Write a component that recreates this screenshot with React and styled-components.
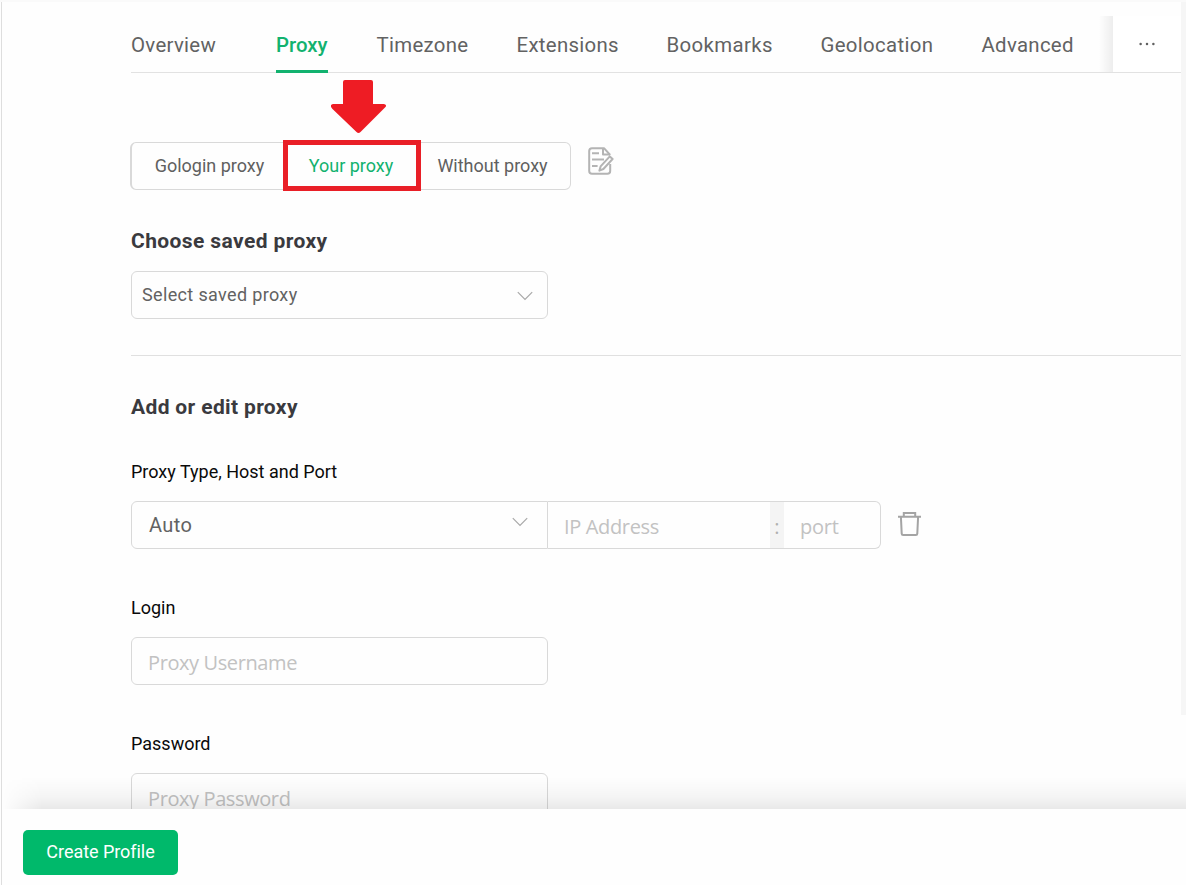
import React from 'react';
import styled, { createGlobalStyle } from 'styled-components';

const GlobalStyle = createGlobalStyle`
  *, *::before, *::after { box-sizing: border-box; }
  body { margin: 0; background: #fff; overflow: hidden; }
  button, input { font: inherit; letter-spacing: inherit; }
`;

const line = '#d9d9d9';
const green = '#00b96b';

const Page = styled.div`
  display: flex;
  flex-direction: column;
  width: 1186px;
  height: 885px;
  overflow: hidden;
  background: #fefefe;
  border-top: 2px solid #fafafa;
  font-family: Roboto, sans-serif;
`;

const Body = styled.div`
  display: flex;
  height: 807px;
  flex: none;
  overflow: hidden;
  border-left: 1px solid #fefefe;
`;

const Panel = styled.main`
  flex: 1;
  min-width: 0;
  border-left: 1px solid #dedede;
  padding: 14px 0 0 129px;
`;

const ScrollTrack = styled.div`
  flex: none;
  width: 5px;
  height: 713px;
  background: #f6f6f6;
`;

const TabBar = styled.nav`
  display: flex;
  height: 57px;
  border-bottom: 1px solid #e2e2e2;
`;

const Tab = styled.a`
  flex: none;
  width: ${p => p.$width}px;
  margin-right: ${p => p.$gap || 48}px;
  height: 57px;
  padding-top: 17px;
  line-height: 24px;
  font-size: 20.4px;
  font-weight: ${p => (p.$active ? 500 : 400)};
  letter-spacing: ${p => p.$track}px;
  white-space: nowrap;
  color: ${p => (p.$active ? '#12b26f' : '#626262')};
  border-bottom: ${p => (p.$active ? '3px solid #12b26f' : '0')};
`;

const TabShade = styled.div`
  width: 14px;
  margin-left: auto;
  background: linear-gradient(to right, rgba(0, 0, 0, 0), rgba(0, 0, 0, 0.065));
`;

const More = styled.button`
  width: 68px;
  border: 0;
  padding: 0;
  display: flex;
  align-items: center;
  justify-content: center;
  background: #fff;
`;

const ModeRow = styled.div`
  display: flex;
  margin: 67px 0 0 -1px;
  height: 51px;
  align-items: center;
`;

const Modes = styled.div`
  display: flex;
  align-items: center;
  height: 48px;
  width: 441px;
  border: 1px solid ${line};
  border-left-width: 2px;
  border-radius: 6px;
`;

const Mode = styled.button`
  flex: none;
  width: ${p => p.$width}px;
  height: ${p => (p.$active ? 51 : 46)}px;
  padding: ${p => p.$pad || '0'};
  border: ${p => (p.$active ? '5px solid #e91f27' : '0')};
  background: ${p => (p.$active ? '#fefefe' : 'transparent')};
  color: ${p => (p.$active ? '#12b26f' : '#606060')};
  font-size: 18px;
  letter-spacing: ${p => p.$track}px;
  white-space: nowrap;
`;

const PointerArrow = styled.svg`
  position: absolute;
  left: 331px;
  top: 80px;
`;

const NoteIcon = styled.svg`
  margin: -10px 0 0 17px;
`;

const Heading = styled.h2`
  margin: ${p => p.$top}px 0 0;
  font-size: 21px;
  line-height: 24px;
  font-weight: 700;
  letter-spacing: ${p => p.$track}px;
  color: #3a3a3e;
`;

const Select = styled.div`
  display: flex;
  align-items: center;
  justify-content: space-between;
  width: 417px;
  height: 48px;
  border: 1px solid ${line};
  border-radius: ${p => (p.$joined ? '6px 0 0 6px' : '6px')};
  padding: ${p => (p.$joined ? '0 19px 0 17px' : '0 14px 2px 10px')};
  font-size: ${p => (p.$joined ? 20 : 18)}px;
  letter-spacing: ${p => p.$track}px;
  color: #626262;

  svg {
    margin-top: ${p => (p.$joined ? '-6px' : '3px')};
  }
`;

const SavedSelect = styled(Select)`
  margin-top: 18px;
`;

const Divider = styled.hr`
  margin: 36px 0 0;
  border: 0;
  border-top: 1px solid #e0e0e0;
`;

const Label = styled.label`
  display: block;
  margin-top: ${p => p.$top}px;
  height: 22px;
  line-height: 22px;
  font-size: 18px;
  letter-spacing: ${p => p.$track}px;
  color: #0a0a0a;
`;

const HostRow = styled.div`
  display: flex;
  align-items: center;
  margin-top: 18px;
  height: 48px;
`;

const HostGroup = styled.div`
  display: flex;
  width: 333px;
  height: 48px;
  border: 1px solid ${line};
  border-left: 0;
  border-radius: 0 6px 6px 0;
  overflow: hidden;
`;

const Input = styled.input`
  width: ${p => p.$width}px;
  height: 100%;
  border: 0;
  outline: 0;
  padding: 3px 0 0 16px;
  background: transparent;
  font-family: 'Open Sans', 'Noto Sans', sans-serif;
  font-weight: 400;
  font-size: 20px;
  letter-spacing: ${p => p.$track}px;
  &::placeholder { color: #c2c2c2; opacity: 1; }
`;

const Colon = styled.span`
  flex: none;
  width: 14px;
  padding-top: 11px;
  text-align: center;
  font: 400 20px/28px 'Open Sans', sans-serif;
  background: #f4f4f4;
  color: #b0b0b0;
`;

const TrashIcon = styled.svg`
  margin: -3px 0 0 17px;
`;

const Field = styled(Input)`
  display: block;
  margin-top: 18px;
  width: 417px;
  height: 48px;
  padding-left: 16px;
  border: 1px solid ${line};
  border-radius: 6px;
`;

const Footer = styled.footer`
  position: relative;
  flex: 1;
  padding: 21px 0 0 21px;
  margin-left: 1px;
  border-left: 1px solid #dedede;
  background: #fefefe;
  &::before {
    content: '';
    position: absolute;
    left: 0;
    right: 0;
    bottom: 100%;
    height: 32px;
    background: linear-gradient(to top, rgba(0, 0, 0, 0.085), rgba(0, 0, 0, 0.035) 40%, rgba(0, 0, 0, 0));
    mask-image: linear-gradient(to right, transparent, #000 40px);
    pointer-events: none;
  }
`;

const CreateButton = styled.button`
  width: 155px;
  height: 45px;
  padding: 0 0 2px 0;
  border: 0;
  border-radius: 5px;
  background: ${green};
  color: #fff;
  font-size: 18px;
  letter-spacing: -0.05px;
`;

const tabs = [
  { label: 'Overview', width: 85, gap: 60, track: 0.3 },
  { label: 'Proxy', width: 52, gap: 48.5, active: true, track: 0 },
  { label: 'Timezone', width: 92, track: 0.3 },
  { label: 'Extensions', width: 102, track: 0.3 },
  { label: 'Bookmarks', width: 106, track: 0.37 },
  { label: 'Geolocation', width: 113, track: 0.33 },
  { label: 'Advanced', width: 93, gap: 1, track: 0.3 },
];

const Chevron = () => (
  <svg width="16" height="10" viewBox="0 0 16 10" fill="none" stroke="#a8a8a8" strokeWidth="1.2">
    <path d="M0.8 1.2 L8 8.4 L15.2 1.2" />
  </svg>
);

export default function App() {
  return (
    <>
      <GlobalStyle />
      <Page>
        <Body>
          <Panel>
            <TabBar>
              {tabs.map(t => (
                <Tab key={t.label} $width={t.width} $gap={t.gap} $active={t.active} $track={t.track}>{t.label}</Tab>
              ))}
              <TabShade />
              <More aria-label="More">
                <svg width="16" height="4" viewBox="0 0 16 4" fill="#606060">
                  <circle cx="1.6" cy="2" r="1.25" />
                  <circle cx="8" cy="2" r="1.25" />
                  <circle cx="14.4" cy="2" r="1.25" />
                </svg>
              </More>
            </TabBar>
            <ModeRow>
              <Modes>
                <Mode $width={151} $pad="0 0 0 4px" $track={0}>Gologin proxy</Mode>
                <Mode $width={138} $active $pad="0 2px 0 0" $track={0}>Your proxy</Mode>
                <Mode $width={144} $pad="0 1px 0 0" $track={0}>Without proxy</Mode>
              </Modes>
              <NoteIcon width="26" height="28" viewBox="0 0 26 28" fill="none" stroke="#b4b4b4" strokeWidth="2" strokeLinejoin="round">
                <path d="M22.2 8 L16 1.2 H4 Q1.2 1.2 1.2 4 V24 Q1.2 26.8 4 26.8 H19.4 Q22.2 26.8 22.2 24 V17" />
                <path d="M15 1.2 V7.6 H22" />
                <path d="M4 6.2 H11 M4 12.6 H16 M4 19 H9.6" />
                <path d="M21.8 9.4 L24.6 12 L15.4 22 L11.4 23.6 L12.6 19.4 Z" fill="#fefefe" />
              </NoteIcon>
            </ModeRow>
            <Heading $top={38} $track={0.4}>Choose saved proxy</Heading>
            <SavedSelect $track={0.35}>
              <span>Select saved proxy</span>
              <Chevron />
            </SavedSelect>
            <Divider />
            <Heading $top={39} $track={0.35}>Add or edit proxy</Heading>
            <Label $top={42} $track={0}>Proxy Type, Host and Port</Label>
            <HostRow>
              <Select $joined $track={0.4}>
                <span>Auto</span>
                <Chevron />
              </Select>
              <HostGroup>
                <Input $width={222} placeholder="IP Address" $track={-0.35} />
                <Colon>:</Colon>
                <Input $width={96} placeholder="port" $track={-0.2} />
              </HostGroup>
              <TrashIcon width="24" height="26" viewBox="0 0 24 26" fill="none" stroke="#a4a4a4" strokeWidth="2">
                <path d="M0 5.7 H23 M5.8 5.6 V2 H17.2 V5.6 M2.9 5.8 L3.7 22.6 Q3.8 24 5.1 24 H17.9 Q19.2 24 19.3 22.6 L20.1 5.8" />
              </TrashIcon>
            </HostRow>
            <Label $top={48} $track={0}>Login</Label>
            <Field placeholder="Proxy Username" $track={-0.4} />
            <Label $top={48} $track={0}>Password</Label>
            <Field placeholder="Proxy Password" $track={-0.4} />
          </Panel>
          <ScrollTrack />
        </Body>
        <Footer>
          <CreateButton>Create Profile</CreateButton>
        </Footer>
        <PointerArrow width="56" height="54" viewBox="0 0 56 54" fill="#ee1c24">
          <path d="M14 0 H40 Q42 0 42 2 V24 H53 Q57 25 53.5 28 L29.5 52 Q27.5 54 25.5 52 L1.5 29 Q-2 25 2 24 H12 V2 Q12 0 14 0 Z" />
        </PointerArrow>
      </Page>
    </>
  );
}
